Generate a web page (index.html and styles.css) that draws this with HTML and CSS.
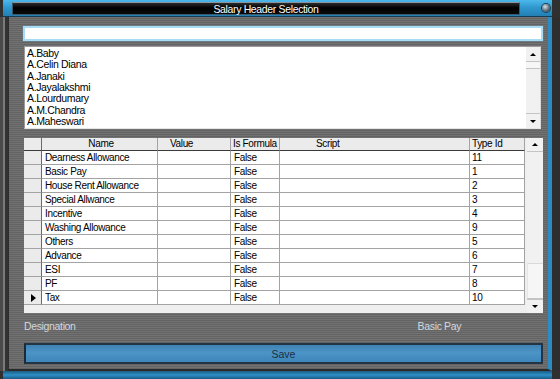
FILE: index.html
```html
<!DOCTYPE html>
<html lang="en">
<head>
  <meta charset="UTF-8" />
  <title>Salary Header Selection</title>
  <link rel="stylesheet" href="styles.css">
</head>
<body>
  <div class="window">
    <div class="titlebar">
      <div class="title">Salary Header Selection</div>
      <span class="close"></span>
    </div>
    <div class="frame">
      <div class="body">
        <input class="search" type="text">

        <div class="listbox">
          <ul class="items">
            <li>A.Baby</li>
            <li>A.Celin Diana</li>
            <li>A.Janaki</li>
            <li>A.Jayalakshmi</li>
            <li>A.Lourdumary</li>
            <li>A.M.Chandra</li>
            <li>A.Maheswari</li>
          </ul>
          <div class="vscroll list-scroll">
            <div class="sbtn"><span class="arrow up"></span></div>
            <div class="thumb"></div>
            <div class="track"></div>
            <div class="sbtn down-btn"><span class="arrow down"></span></div>
          </div>
        </div>

        <div class="grid">
          <div class="grid-main">
            <div class="row head">
              <div class="cell rh"></div>
              <div class="cell c-name">Name</div>
              <div class="cell c-value">Value</div>
              <div class="cell c-formula">Is Formula</div>
              <div class="cell c-script">Script</div>
              <div class="cell c-type">Type Id</div>
            </div>
            <div class="row"><div class="cell rh"></div><div class="cell">Dearness Allowance</div><div class="cell"></div><div class="cell">False</div><div class="cell"></div><div class="cell">11</div></div>
            <div class="row"><div class="cell rh"></div><div class="cell">Basic Pay</div><div class="cell"></div><div class="cell">False</div><div class="cell"></div><div class="cell">1</div></div>
            <div class="row"><div class="cell rh"></div><div class="cell">House Rent Allowance</div><div class="cell"></div><div class="cell">False</div><div class="cell"></div><div class="cell">2</div></div>
            <div class="row"><div class="cell rh"></div><div class="cell">Special Allwance</div><div class="cell"></div><div class="cell">False</div><div class="cell"></div><div class="cell">3</div></div>
            <div class="row"><div class="cell rh"></div><div class="cell">Incentive</div><div class="cell"></div><div class="cell">False</div><div class="cell"></div><div class="cell">4</div></div>
            <div class="row"><div class="cell rh"></div><div class="cell">Washing Allowance</div><div class="cell"></div><div class="cell">False</div><div class="cell"></div><div class="cell">9</div></div>
            <div class="row"><div class="cell rh"></div><div class="cell">Others</div><div class="cell"></div><div class="cell">False</div><div class="cell"></div><div class="cell">5</div></div>
            <div class="row"><div class="cell rh"></div><div class="cell">Advance</div><div class="cell"></div><div class="cell">False</div><div class="cell"></div><div class="cell">6</div></div>
            <div class="row"><div class="cell rh"></div><div class="cell">ESI</div><div class="cell"></div><div class="cell">False</div><div class="cell"></div><div class="cell">7</div></div>
            <div class="row"><div class="cell rh"></div><div class="cell">PF</div><div class="cell"></div><div class="cell">False</div><div class="cell"></div><div class="cell">8</div></div>
            <div class="row"><div class="cell rh current"><span class="pointer"></span></div><div class="cell">Tax</div><div class="cell"></div><div class="cell">False</div><div class="cell"></div><div class="cell">10</div></div>
          </div>
          <div class="vscroll grid-scroll">
            <div class="sbtn"><span class="arrow up"></span></div>
            <div class="track"></div>
            <div class="thumb big"></div>
            <div class="sbtn down-btn"><span class="arrow down"></span></div>
          </div>
        </div>

        <div class="labels">
          <span>Designation</span>
          <span class="basic">Basic Pay</span>
        </div>

        <button class="save">Save</button>
      </div>
    </div>
    <div class="bottom-strip"></div>
  </div>
</body>
</html>
```

FILE: styles.css
```css
body {
  margin: 0;
  background: #1c1c1c;
  font-family: "Liberation Sans", Arial, sans-serif;
  font-size: 10px;
  letter-spacing: -0.35px;
}

.window {
  width: 560px;
  height: 379px;
  display: flex;
  flex-direction: column;
  background: #303030;
  overflow: hidden;
}

/* title bar */
.titlebar {
  height: 17px;
  display: flex;
  align-items: center;
  margin: 0 8px 0 3px;
  padding-left: 9px;
  background: linear-gradient(#4cb8ea, #2e95cc 50%, #2280b4);
  border-bottom: 1px solid #143c55;
  box-sizing: border-box;
}

.title {
  width: 508px;
  height: 13px;
  line-height: 12px;
  font-size: 10.5px;
  text-align: center;
  color: #fff;
  background: linear-gradient(#2c2c2c, #000 45%, #0a0a0a);
  border: 1px solid #3a5a6c;
  border-top-color: #8a949a;
  box-sizing: border-box;
}

.close {
  width: 8px;
  height: 8px;
  margin-left: 22px;
  border-radius: 50%;
  background: radial-gradient(circle at 40% 35%, #d8e2e8, #6a7a84 50%, #22323c);
  box-shadow: 0 0 0 1px #174560;
}

/* main frame */
.frame {
  flex: 1;
  display: flex;
  padding-left: 3px;
  background: linear-gradient(90deg, #4a4a4a 0 3px, #7a7a7a 3px 5px, #333 5px 8px, #2e2e2e 8px);
}

.body {
  width: 544px;
  display: flex;
  flex-direction: column;
  align-items: flex-start;
  padding: 9px 0 0 15px;
  box-sizing: border-box;
  margin-left: 5px;
  background: repeating-linear-gradient(#727272 0 1px, #636363 1px 2px);
  border-left: 1px solid #2e2e2e;
  border-right: 4px solid #2a8cc2;
  border-bottom: 2px solid #2a2a2a;
}

.search {
  width: 520px;
  height: 15px;
  margin: 0 0 0 -1px;
  padding: 0;
  border: 2px solid #a8dcf4;
  box-shadow: 0 0 1px #5fb8e4;
  background: #fff;
  box-sizing: border-box;
}

/* list box */
.listbox {
  margin-top: 5px;
  width: 517px;
  height: 83px;
  display: flex;
  background: #fff;
  border: 1px solid #9a9a9a;
  border-right-color: #d8d8d8;
  border-bottom-color: #e4e4e4;
  box-sizing: border-box;
}

.items {
  flex: 1;
  list-style: none;
  margin: 0;
  padding: 1px 0 0 2px;
  color: #000;
  font-size: 10.5px;
  line-height: 11.35px;
}

.vscroll {
  display: flex;
  flex-direction: column;
  background: #f1f1f1;
}

.list-scroll {
  width: 14px;
}

.sbtn {
  height: 15px;
  display: flex;
  align-items: center;
  justify-content: center;
  background: #f1f1f1;
  border-bottom: 1px solid #c4c4c4;
  box-sizing: border-box;
}

.down-btn {
  border-bottom: 0;
  border-top: 1px solid #c4c4c4;
}

.thumb {
  height: 7px;
  background: #f6f6f6;
  border-bottom: 1px solid #c4c4c4;
  box-sizing: border-box;
}

.thumb.big {
  height: 36px;
  border-top: 1px solid #dadada;
  border-left: 1px solid #e6e6e6;
}

.track {
  flex: 1;
}

.arrow {
  width: 0;
  height: 0;
  border-left: 3px solid transparent;
  border-right: 3px solid transparent;
}

.arrow.up {
  border-bottom: 3px solid #000;
}

.arrow.down {
  border-top: 3px solid #000;
}

/* data grid */
.grid {
  margin-top: 9px;
  width: 519px;
  height: 175px;
  display: flex;
  justify-content: space-between;
  background: #efefef;
}

.grid-main {
  width: 501px;
  display: flex;
  flex-direction: column;
}

.row {
  display: grid;
  grid-template-columns: 18px 116px 73px 49px 190px 55px;
  height: 14px;
  background: #fff;
}

.row.head {
  height: 13px;
  background: #ebebeb;
}

.cell {
  border-right: 1px solid #a3a3a3;
  border-bottom: 1px solid #a3a3a3;
  padding-left: 3px;
  line-height: 13px;
  white-space: nowrap;
  overflow: hidden;
  box-sizing: border-box;
}

.cell:last-child {
  padding-left: 2px;
}

.head .cell {
  line-height: 12px;
  border-bottom-color: #3a3a3a;
}

.head .c-name { text-align: center; }
.head .c-value { padding-left: 12px; }
.head .c-formula { padding-left: 2px; }
.head .c-script { padding-left: 36px; }

.cell.rh {
  background: #ebebeb;
  display: flex;
  align-items: center;
  justify-content: center;
  border-right-color: #6a6a6a;
}

.pointer {
  width: 0;
  height: 0;
  border-top: 4px solid transparent;
  border-bottom: 4px solid transparent;
  border-left: 5px solid #000;
  margin-left: -2px;
}

.grid-scroll {
  width: 16px;
}

.grid-scroll .sbtn {
  height: 14px;
}

/* footer */
.labels {
  margin-top: 7px;
  width: 519px;
  display: flex;
  color: #d2d8de;
  font-size: 10.5px;
}

.labels .basic {
  margin-left: 342px;
}

.save {
  margin: 11px 0 0 0;
  width: 519px;
  height: 21px;
  padding: 0;
  font: inherit;
  font-size: 10.5px;
  color: #1b2e44;
  background: linear-gradient(#3f82b4, #4d94c6 45%, #3d86ba);
  border: 2px solid #243444;
  border-left-color: #1c2a38;
  box-sizing: border-box;
}

.bottom-strip {
  height: 8px;
  margin: 0 8px 0 3px;
  background: linear-gradient(#1c5a80, #2d90c6 50%, #1a5a84);
}
```
